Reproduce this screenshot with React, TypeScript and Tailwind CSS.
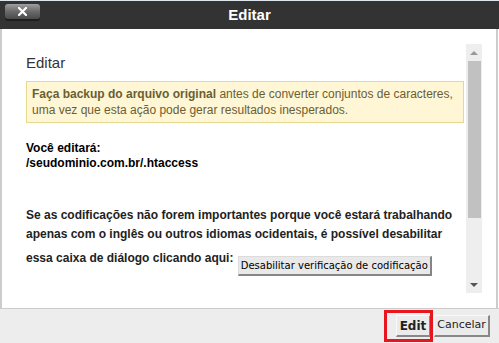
export default function App() {
  return (
    <div
      className="relative w-[499px] h-[343px] overflow-hidden bg-white flex flex-col"
      style={{ fontFamily: '"Liberation Sans", Arial, sans-serif' }}
    >
      {/* page behind the dialog */}
      <div className="h-px bg-[#dfe6ee]" />

      {/* Title bar */}
      <div className="relative h-[28px] bg-[#333333] flex items-center justify-center">
        <button className="absolute left-[5px] top-[3px] w-[35px] h-[15px] rounded-[3px] bg-gradient-to-b from-[#a0a0a0] via-[#6a6a6a] to-[#4a4a4a] shadow-[0_2px_0_#1e1e1e] flex items-center justify-center">
          <svg width="9" height="9" viewBox="0 0 9 9">
            <path d="M1 1L8 8M8 1L1 8" stroke="#fff" strokeWidth="2.2" strokeLinecap="square" />
          </svg>
        </button>
        <span className="text-white font-bold text-[15px]">Editar</span>
      </div>

      {/* Body */}
      <div className="flex-1 mr-px border-l-2 border-r-2 border-[#cccccc] bg-white pt-[15px] pb-[15px] pl-[24px] pr-[14px] flex gap-[2px]">
        <div className="flex-1 pt-[10px]">
          <h2 className="text-[15px] leading-[18px] text-[#333]">Editar</h2>

          <div className="mt-[9px] border border-[#e6d88c] bg-[#fef6d4] px-[5px] py-[4px] text-[12px] leading-[16px] text-[#6b5e33]">
            <b className="font-bold">Faça backup do arquivo original</b> antes de converter conjuntos de caracteres,
            uma vez que esta ação pode gerar resultados inesperados.
          </div>

          <p className="mt-[18px] text-[12px] leading-[15px] font-bold text-black">
            Você editará:
            <br />
            /seudominio.com.br/.htaccess
          </p>

          <p className="mt-[35px] text-[12px] leading-[19px] font-bold text-[#222]">
            Se as codificações não forem importantes porque você estará trabalhando apenas com o inglês ou outros
            idiomas ocidentais, é possível desabilitar essa caixa de diálogo clicando aqui:{" "}
            <button
              className="align-[-7px] mt-[12px] ml-[1px] h-[20px] px-[2px] bg-[#e9e9e9] border border-t-[#dcdcdc] border-l-[#dcdcdc] border-r-2 border-b-2 border-r-[#858585] border-b-[#858585] text-[10px] font-normal text-black leading-[16px]"
              style={{ fontFamily: '"DejaVu Sans", Verdana, sans-serif' }}
            >
              Desabilitar verificação de codificação
            </button>
          </p>
        </div>

        {/* scrollbar */}
        <div className="w-[16px] h-[249px] bg-[#eeeeee] flex flex-col items-center">
          <div className="h-[17px] flex items-center justify-center">
            <div className="w-0 h-0 border-l-[4px] border-r-[4px] border-b-[4px] border-l-transparent border-r-transparent border-b-[#999]" />
          </div>
          <div className="w-[13px] h-[157px] bg-[#c1c1c1]" />
          <div className="flex-1" />
          <div className="h-[17px] flex items-center justify-center">
            <div className="w-0 h-0 border-l-[4px] border-r-[4px] border-t-[4px] border-l-transparent border-r-transparent border-t-[#555]" />
          </div>
        </div>
      </div>

      {/* Footer */}
      <div
        className="h-[35px] border-t border-[#cccccc] bg-[#ededed] flex items-center justify-end pr-[9px] gap-[3px]"
        style={{ fontFamily: '"DejaVu Sans", Verdana, sans-serif' }}
      >
        <button className="w-[35px] h-[22px] flex items-center justify-center bg-[#ebebeb] border border-t-[#f8f8f8] border-l-[#f8f8f8] border-r-2 border-b-2 border-r-[#888] border-b-[#888] text-[12px] font-bold text-[#222]">
          Edit
        </button>
        <button className="w-[56px] h-[22px] flex items-center justify-center bg-[#ebebeb] border border-t-[#f8f8f8] border-l-[#f8f8f8] border-r-2 border-b-2 border-r-[#888] border-b-[#888] text-[11px] text-[#222]">
          Cancelar
        </button>
      </div>

      {/* highlight */}
      <div className="absolute left-[384px] top-[310px] w-[49px] h-[32px] border-[3px] border-[#e8141e] pointer-events-none" />
    </div>
  );
}
